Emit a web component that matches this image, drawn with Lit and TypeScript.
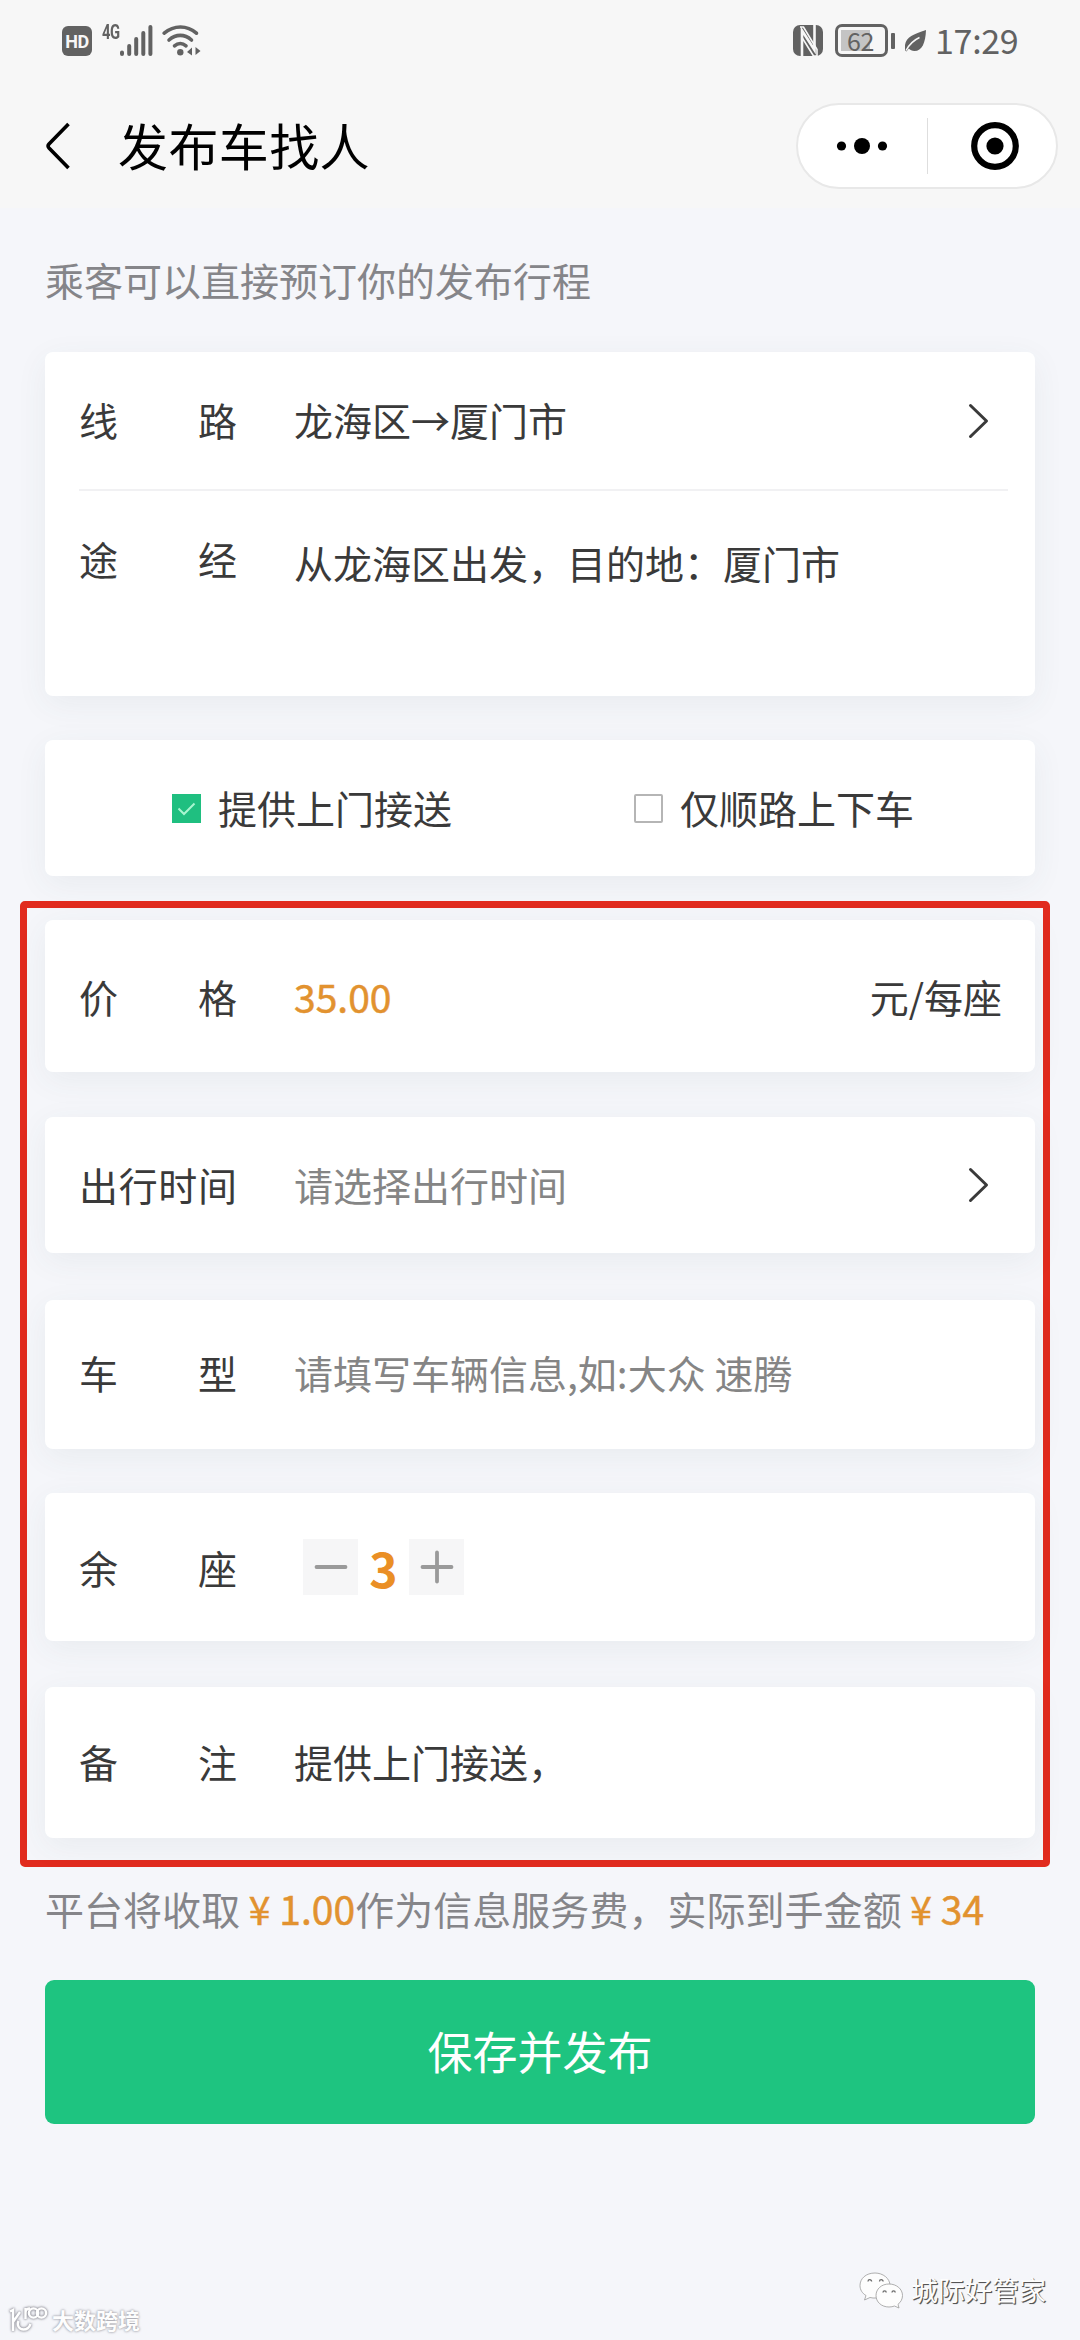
import { LitElement, html, css, svg, nothing } from "lit";
import { customElement, property, state } from "lit/decorators.js";

const chevron = html`<svg class="chevron" width="22" height="36" viewBox="0 0 22 36">
  <path d="M2.5 2.5 L18.5 18 L2.5 33.5" fill="none" stroke="#3a3a3a" stroke-width="3" stroke-linejoin="round" stroke-linecap="round" />
</svg>`;

@customElement("status-bar")
class StatusBar extends LitElement {
  static styles = css`
    :host {
      display: flex;
      justify-content: space-between;
      align-items: flex-start;
      height: 80px;
      box-sizing: border-box;
      padding: 24px 62px 0 62px;
      color: #626262;
    }
    .side {
      display: flex;
      align-items: flex-start;
      height: 34px;
    }
    svg {
      display: block;
      flex: none;
    }
    .hd {
      width: 30px;
      height: 30px;
      margin-top: 2px;
      border-radius: 6px;
      background: #626262;
      color: #f7f7f7;
      font: 700 18px/31px "Roboto", sans-serif;
      text-align: center;
      letter-spacing: -0.5px;
    }
    .net {
      margin-left: 10px;
      width: 18px;
      font: 700 20px/17px "Roboto", sans-serif;
      letter-spacing: -0.5px;
      transform: scaleX(0.74);
      transform-origin: left;
      white-space: nowrap;
    }
    .battery {
      box-sizing: border-box;
      width: 53px;
      height: 33px;
      margin-left: 12px;
      border: 3px solid #626262;
      border-radius: 7px;
      padding: 3px;
    }
    .level {
      width: 29px;
      height: 21px;
      background: #c4c4c4;
      font: 400 25px/20px "Noto Sans CJK SC", sans-serif;
      text-indent: 6px;
      letter-spacing: -0.3px;
      white-space: nowrap;
    }
    .nub {
      width: 4px;
      height: 16px;
      margin: 9px 10px 0 3px;
      border-radius: 1px;
      background: #626262;
    }
    .clock {
      margin: -1px 0 0 9px;
      width: 83px;
      font: 400 34px/34px "Noto Sans CJK SC", sans-serif;
      letter-spacing: -0.3px;
      white-space: nowrap;
    }
  `;

  render() {
    return html`
      <div class="side">
        <div class="hd">HD</div>
        <div class="net">4G</div>
        <svg width="33" height="33" viewBox="0 0 33 33">
          <g stroke="#626262" stroke-width="4" stroke-linecap="round">
            <path d="M2 28.5v1.5M9.2 22v8M16.2 15v15M23.3 9v21M30.4 3v27" />
          </g>
        </svg>
        <svg style="margin-left:9px" width="40" height="33" viewBox="0 0 40 33">
          <g fill="none" stroke="#626262" stroke-width="3.6" stroke-linecap="round">
            <path d="M2.2 9.2C12 1 25 1 34.400 9.200" />
            <path d="M7 16C14 9.800 22.500 9.800 29.500 16" />
            <path d="M12.500 21.800C16 18.800 20.500 18.800 24 21.800" />
          </g>
          <circle cx="18.300" cy="28.200" r="3.200" fill="#626262" />
          <path d="M25 28l5-4.500v8zM38.500 27l-5-4v8z" fill="#626262" />
        </svg>
      </div>
      <div class="side">
        <svg style="margin-top:1px" width="30" height="31" viewBox="0 0 30 31">
          <rect width="30" height="31" rx="7" fill="#626262" />
          <path d="M9 32V5.500L21.500 25V-1" fill="none" stroke="#f7f7f7" stroke-width="2.600" />
          <path d="M7 2L10.500 2L24 24.500V31H20.500L9 12.500" fill="none" stroke="#f7f7f7" stroke-width="1.600" />
        </svg>
        <div class="battery"><div class="level">62</div></div>
        <div class="nub"></div>
        <svg style="margin-top:6px" width="21" height="22" viewBox="0 0 21 22">
          <path d="M21 0C20.500 13 17 21 9.500 21C7 21 5 20 3.800 18.500L1.500 21.500L0 20.500C-1.500 8 6 5 21 0Z" fill="#626262" />
          <path d="M1 20.500C4.500 14 9 10 14.500 7.500" stroke="#f7f7f7" stroke-width="1.500" fill="none" />
        </svg>
        <div class="clock">17:29</div>
      </div>
    `;
  }
}

@customElement("nav-header")
class NavHeader extends LitElement {
  @property() heading = "";

  static styles = css`
    :host {
      display: flex;
      align-items: center;
      height: 128px;
      padding: 0 22px 0 45px;
      box-sizing: border-box;
    }
    .inner {
      display: flex;
      align-items: center;
      width: 100%;
      height: 86px;
      margin-top: 4px;
    }
    .title {
      flex: 1;
      margin: -4px 0 0 47px;
      font: 400 50px/70px "Noto Sans CJK SC", sans-serif;
      letter-spacing: 0.4px;
      color: #000;
    }
    .capsule {
      box-sizing: border-box;
      display: flex;
      align-items: center;
      width: 262px;
      height: 86px;
      border: 2px solid #e8e8e8;
      border-radius: 43px;
      background: #fff;
    }
    .half {
      flex: 1;
      display: flex;
      align-items: center;
      justify-content: center;
    }
    .sep {
      width: 1px;
      height: 56px;
      background: #dedede;
    }
    svg {
      display: block;
    }
  `;

  render() {
    return html`<div class="inner">
      <svg width="26" height="48" viewBox="0 0 26 48">
        <path d="M23.500 2L4 22Q2.200 24 4 26L23.500 46" fill="none" stroke="#000" stroke-width="3.600" />
      </svg>
      <div class="title">${this.heading}</div>
      <div class="capsule">
        <div class="half">
          <svg width="52" height="18" viewBox="0 0 52 18">
            <circle cx="5.500" cy="9" r="4.600" /><circle cx="26" cy="9" r="8" /><circle cx="46.500" cy="9" r="4.600" />
          </svg>
        </div>
        <div class="sep"></div>
        <div class="half">
          <svg width="50" height="50" viewBox="0 0 50 50" style="margin-left:6px">
            <circle cx="25" cy="25" r="20.800" fill="none" stroke="#000" stroke-width="6.200" />
            <circle cx="25" cy="25" r="8.600" />
          </svg>
        </div>
      </div>
    </div>`;
  }
}

@customElement("field-row")
class FieldRow extends LitElement {
  @property() label = "";
  @property({ type: Boolean }) arrow = false;

  static styles = css`
    :host {
      display: flex;
      align-items: center;
      box-sizing: border-box;
      padding: 0 33px 0 34px;
      font: 400 39px/58px "Noto Sans CJK SC", sans-serif;
      color: #3a3a3a;
    }
    .label {
      width: 158px;
      margin-right: 57px;
      padding-bottom: var(--lift, 0);
      text-align: justify;
      text-align-last: justify;
      white-space: nowrap;
    }
    .body {
      flex: 1;
      display: flex;
      align-items: center;
      justify-content: space-between;
      padding-bottom: var(--lift, 0);
      white-space: nowrap;
    }
    .chevron {
      display: block;
      margin-right: 12px;
    }
  `;

  render() {
    return html`
      <div class="label">${this.label}</div>
      <div class="body"><slot></slot></div>
      ${this.arrow ? chevron : nothing}
    `;
  }
}

@customElement("seat-stepper")
class SeatStepper extends LitElement {
  @state() private seats = 3;

  static styles = css`
    :host {
      display: flex;
      align-items: center;
      margin-left: 9px;
    }
    .btn {
      display: flex;
      align-items: center;
      justify-content: center;
      width: 55px;
      height: 56px;
      background: #f6f6f7;
      border: 0;
      padding: 0;
    }
    .count {
      width: 51px;
      text-align: center;
      font: 700 48px/56px "Noto Sans CJK SC", sans-serif;
      color: #ea8f25;
    }
  `;

  private step(by: number) {
    this.seats = Math.max(1, this.seats + by);
  }

  private sign(d: string) {
    return html`<svg width="36" height="36" viewBox="0 0 36 36">
      ${svg`<path d=${d} stroke="#9a9a9a" stroke-width="3.800" stroke-linecap="round" />`}
    </svg>`;
  }

  render() {
    return html`
      <button class="btn" @click=${() => this.step(-1)}>${this.sign("M3.500 18h29")}</button>
      <div class="count">${this.seats}</div>
      <button class="btn" @click=${() => this.step(1)}>${this.sign("M3.500 18h29M18 3.500v29")}</button>
    `;
  }
}

@customElement("app-root")
class AppRoot extends LitElement {
  @state() private doorToDoor = true;

  static styles = css`
    :host {
      display: block;
      width: 1080px;
      height: 2340px;
      position: relative;
      overflow: hidden;
      background: #f5f6fa;
      font: 400 39px/58px "Noto Sans CJK SC", sans-serif;
      color: #3a3a3a;
    }
    .top {
      background: #f7f7f7;
    }
    .hint {
      padding: 42px 45px 0;
      line-height: 58px;
      color: #858589;
    }
    .card {
      background: #fff;
      border-radius: 8px;
      box-shadow: 0 8px 32px rgba(60, 85, 95, 0.065);
    }
    .route {
      margin: 44px 45px 0;
      height: 344px;
    }
    .line {
      height: 137px;
      --lift: 4px;
    }
    .rule {
      height: 2px;
      margin: 0 27px 0 34px;
      background: #f1f1f3;
    }
    .via {
      height: 140px;
      --lift: 6px;
    }
    .via-text {
      padding-top: 7px;
    }
    .options {
      display: flex;
      align-items: center;
      height: 136px;
      margin: 44px 45px 0;
    }
    .option {
      display: flex;
      align-items: center;
    }
    .option.first {
      margin-left: 127px;
      width: 462px;
    }
    .box {
      box-sizing: border-box;
      width: 29px;
      height: 29px;
      margin-right: 17px;
      border: 2px solid #b5b5b5;
      border-radius: 2px;
      background: #fff;
    }
    .box.on {
      border: 0;
      border-radius: 0;
      background: #1fbf80;
    }
    .box svg {
      display: block;
    }
    .text {
      margin-top: -3px;
    }
    .marked {
      margin: 25px 30px 0 20px;
      box-sizing: border-box;
      height: 966px;
      border: 7px solid #e12b1e;
      border-radius: 5px;
      padding: 12px 8px 0 18px;
    }
    .marked .card {
      display: flex;
    }
    .marked field-row {
      flex: 1;
    }
    .price {
      height: 152px;
      margin-bottom: 45px;
      --lift: 1px;
    }
    .time {
      height: 136px;
      margin-bottom: 47px;
      --lift: 3px;
    }
    .model {
      height: 149px;
      margin-bottom: 44px;
      --lift: 5px;
    }
    .seats {
      height: 148px;
      margin-bottom: 46px;
    }
    .remark {
      height: 151px;
      --lift: 4px;
    }
    .orange {
      color: #e2922f;
      -webkit-text-stroke: 0.5px #e2922f;
    }
    .yen {
      display: inline-block;
      width: 39px;
      text-align: center;
    }
    .muted {
      color: #858585;
    }
    .fee {
      margin: 12px 45px 0;
      color: #858589;
      letter-spacing: 0.04px;
      white-space: nowrap;
    }
    .submit {
      display: block;
      width: 990px;
      height: 144px;
      margin: 43px 45px 0;
      padding: 0 0 3px;
      border: 0;
      border-radius: 9px;
      background: #1ec480;
      color: #fff;
      font: 400 45px/60px "Noto Sans CJK SC", sans-serif;
    }
    .mark {
      position: absolute;
      display: flex;
      align-items: center;
      color: #fdfdfd;
      white-space: nowrap;
    }
    .mark-left {
      left: 9px;
      top: 2304px;
      gap: 5px;
      font-size: 22px;
      line-height: 30px;
      font-weight: 700;
      text-shadow: 0 0 3px #a0a0a8, 0 0 2px #b0b0b8;
    }
    .mark-right {
      left: 859px;
      top: 2270px;
      gap: 7px;
      font-size: 27px;
      line-height: 40px;
      text-shadow: 1px 1px 0 #555, 1px 1px 1px #777;
    }
    .halo {
      overflow: visible;
      filter: drop-shadow(0 0 1px #909098) drop-shadow(0 0 1px #b0b0b8);
    }
  `;

  private box(on: boolean) {
    return html`<div class="box ${on ? "on" : ""}">
      ${on
        ? html`<svg width="29" height="29" viewBox="0 0 29 29">
            <path d="M6.500 14.500L12 20L22.500 9.500" fill="none" stroke="#a8f5d0" stroke-width="2" />
          </svg>`
        : nothing}
    </div>`;
  }

  private money(amount: string) {
    return html`<span class="orange"><span class="yen">¥</span>${amount}</span>`;
  }

  render() {
    return html`
      <div class="top">
        <status-bar></status-bar>
        <nav-header heading="发布车找人"></nav-header>
      </div>
      <div class="hint">乘客可以直接预订你的发布行程</div>

      <div class="card route">
        <field-row class="line" label="线路" arrow>龙海区→厦门市</field-row>
        <div class="rule"></div>
        <field-row class="via" label="途经"><span class="via-text">从龙海区出发，目的地：厦门市</span></field-row>
      </div>

      <div class="card options">
        <div class="option first" @click=${() => (this.doorToDoor = true)}>
          ${this.box(this.doorToDoor)}<span class="text">提供上门接送</span>
        </div>
        <div class="option" @click=${() => (this.doorToDoor = false)}>
          ${this.box(!this.doorToDoor)}<span class="text">仅顺路上下车</span>
        </div>
      </div>

      <div class="marked">
        <div class="card price">
          <field-row label="价格"><span class="orange">35.00</span><span>元/每座</span></field-row>
        </div>
        <div class="card time">
          <field-row label="出行时间" arrow><span class="muted">请选择出行时间</span></field-row>
        </div>
        <div class="card model">
          <field-row label="车型"><span class="muted">请填写车辆信息,如:大众 速腾</span></field-row>
        </div>
        <div class="card seats">
          <field-row label="余座"><seat-stepper></seat-stepper></field-row>
        </div>
        <div class="card remark">
          <field-row label="备注">提供上门接送，</field-row>
        </div>
      </div>

      <div class="fee">平台将收取${this.money("1.00")}作为信息服务费，实际到手金额${this.money("34")}</div>
      <button class="submit">保存并发布</button>

      <div class="mark mark-left">
        <svg class="halo" width="38" height="28" viewBox="0 0 38 28">
          <g fill="none" stroke="#fff" stroke-width="2.400">
            <path d="M1 6.500L4 5V26M4 17L11 7M9.500 16C7.500 20 10 24.500 14.500 24.500C18 24.500 20.500 22 21.500 19" />
            <path d="M16.500 14V3M16.500 8C16.500 5 18.500 3.500 21 3.500" />
            <circle cx="24.500" cy="8" r="4.600" /><circle cx="32.500" cy="8" r="4.600" />
          </g>
        </svg>
        <span>大数跨境</span>
      </div>
      <div class="mark mark-right">
        <svg width="45" height="38" viewBox="0 0 45 38">
          <g fill="#fdfdfd" stroke="#9a9a9a" stroke-width="0.800">
            <path d="M16 2C7 2 1 7.500 1 14.500C1 19 3.500 22.500 7 24.500L5.500 29L11 26.500C13 27 15 27.200 17 27C25 27 31 21 31 14.500C31 7.500 24 2 16 2Z" />
            <path d="M30 13C22.500 13 17 18 17 24.500C17 31 22.500 36 30 36C32 36 34 35.600 35.500 35L40 37L39 33.300C41.800 31.200 43.500 28 43.500 24.500C43.500 18 37.500 13 30 13Z" />
          </g>
          <g fill="none" stroke="#6a6a6a" stroke-width="1.300">
            <path d="M9 10.500a1.800 1.800 0 0 1 3.600 0M20.500 10.500a1.800 1.800 0 0 1 3.600 0M24 21.500a1.600 1.600 0 0 1 3.200 0M33 21.500a1.600 1.600 0 0 1 3.200 0" />
          </g>
        </svg>
        <span>城际好管家</span>
      </div>
    `;
  }
}
